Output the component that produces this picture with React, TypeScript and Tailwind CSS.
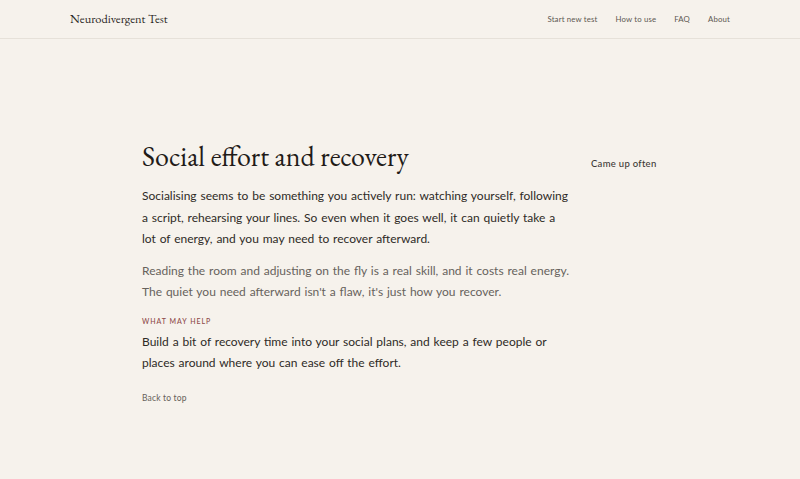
const serif = "font-['EB_Garamond','Liberation_Serif',serif]";
const sans = "font-['Lato','Liberation_Sans',sans-serif]";

const navLinks = ['Start new test', 'How to use', 'FAQ', 'About'];

export default function App() {
  return (
    <div className={`min-h-[479px] bg-[#f6f2ec] text-[#2b2724] ${sans}`}>
      <header className="border-b border-[#e6e1d9]">
        <div className="mx-auto flex h-[38px] max-w-[660px] items-center justify-between">
          <span className={`${serif} text-[12.4px] text-[#2b2724]`}>Neurodivergent Test</span>
          <nav className="flex gap-[18px] pt-[2px] text-[7.8px] tracking-[0.02em] text-[#5d5852]">
            {navLinks.map(link => (
              <a key={link} href="#">
                {link}
              </a>
            ))}
          </nav>
        </div>
      </header>

      <main className="mx-auto flex w-[516px] gap-[21px] pt-[98px]">
        <article className="w-[428px] shrink-0 text-[12px] leading-[21.5px] [word-spacing:0.8px]">
          <h1 className={`${serif} text-[28px] leading-[38px] [word-spacing:0] text-[#1f1b18]`}>
            Social effort and recovery
          </h1>
          <p className="mt-[10px] text-[#2e2a26]">
            Socialising seems to be something you actively run: watching yourself, following a
            script, rehearsing your lines. So even when it goes well, it can quietly take a lot of
            energy, and you may need to recover afterward.
          </p>
          <p className="mt-[10px] text-[#67625c]">
            Reading the room and adjusting on the fly is a real skill, and it costs real energy.
            The quiet you need afterward isn't a flaw, it's just how you recover.
          </p>
          <h2 className="mt-[13px] text-[7px] leading-[10px] font-medium tracking-[0.14em] [word-spacing:0] text-[#8e4a4a] uppercase">
            What may help
          </h2>
          <p className="mt-[5px] text-[#2e2a26]">
            Build a bit of recovery time into your social plans, and keep a few people or places
            around where you can ease off the effort.
          </p>
          <a
            href="#"
            className="mt-[18px] inline-block text-[8.5px] leading-[12px] tracking-[0.02em] [word-spacing:0] text-[#66615a]"
          >
            Back to top
          </a>
        </article>
        <aside className="min-w-0 flex-1 pt-[20px]">
          <p className="text-[9.5px] font-medium tracking-[0.03em] whitespace-nowrap text-[#3d3935]">
            Came up often
          </p>
        </aside>
      </main>
    </div>
  );
}
